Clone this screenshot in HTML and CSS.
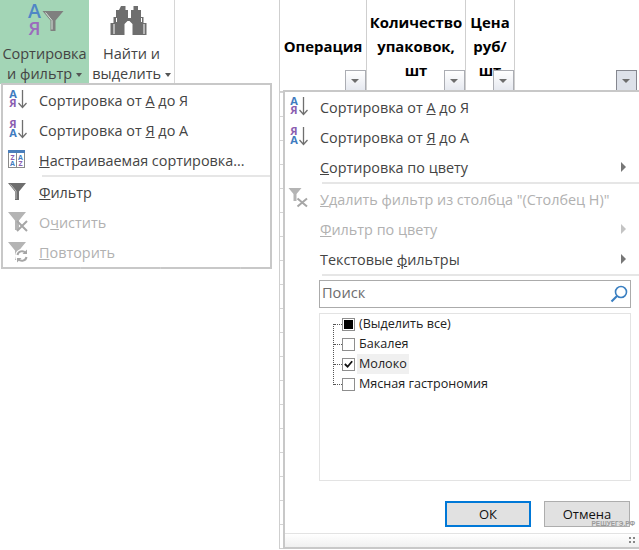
FILE: index.html
```html
<!DOCTYPE html>
<html lang="ru">
<head>
    <meta charset="UTF-8">
    <title>Сортировка и фильтр</title>
    <link rel="stylesheet" href="styles.css">
</head>
<body>

    <div class="page">
        <section class="ribbon-area">
            <div class="ribbon">
                <div class="ribbon-btn sort-btn">
                    <svg class="ribbon-icon" width="44" height="44" viewBox="0 0 44 44">
                        <text x="5" y="18" class="big-a">А</text>
                        <text x="5.500" y="35" class="big-ya">Я</text>
                        <path d="M19.500 11h21l-8 9.500V31h-5V20.500z" fill="#7f7f7f"/>
                        <path d="M22.500 12.500l6.500 8v9" fill="none" stroke="#d8e8de" stroke-width="1"/>
                    </svg>
                    <span>Сортировка</span>
                    <span>и фильтр <i class="caret"></i></span>
                </div>
                <div class="ribbon-btn find-btn">
                    <svg class="ribbon-icon" width="44" height="44" viewBox="0 0 44 44">
                        <g transform="translate(-109.5 0)">
                            <path d="M120.500 6h4.500v4h2.500v8h3v-8h2.500v-4h4.500v4h3v7h2.500v6h3v12h-14V24l-3-3h-2l-3 3v11h-14V23h3v-6h2.500v-7h3z" fill="#6e6e6e"/>
                            <path d="M113.500 24v10M116 18v4M143.500 24v10M141 18v4" stroke="#fff" stroke-width="1"/>
                        </g>
                    </svg>
                    <span>Найти и</span>
                    <span>выделить <i class="caret"></i></span>
                </div>
            </div>
        </section>

        <section class="sheet">
            <div class="sheet-head">
                <div class="head-cell col-op">Операция<b class="filter-btn"></b></div>
                <div class="head-cell col-qty">Количество упаковок, шт<b class="filter-btn"></b></div>
                <div class="head-cell col-price">Цена руб/ шт<b class="filter-btn"></b></div>
                <div class="head-cell col-last"><b class="filter-btn is-open"></b></div>
            </div>
        </section>
    </div>

    <div class="menu sort-menu">
        <div class="menu-item">
            <svg class="menu-icon" width="24" height="24" viewBox="0 0 24 24">
                <text x="7" y="10" class="ltr blue">А</text>
                <text x="7" y="19" class="ltr purple">Я</text>
                <path d="M16.500 2v17M12.500 15l4 4.500 4-4.500" fill="none" stroke="#6f6f6f" stroke-width="1.300"/>
            </svg>
            <span>Сортировка от <u>А</u> до Я</span>
        </div>
        <div class="menu-item">
            <svg class="menu-icon" width="24" height="24" viewBox="0 0 24 24">
                <text x="7" y="10" class="ltr purple">Я</text>
                <text x="7" y="19" class="ltr blue">А</text>
                <path d="M16.500 2v17M12.500 15l4 4.500 4-4.500" fill="none" stroke="#6f6f6f" stroke-width="1.300"/>
            </svg>
            <span>Сортировка от <u>Я</u> до А</span>
        </div>
        <div class="menu-item">
            <svg class="menu-icon" width="24" height="24" viewBox="0 0 24 24">
                <rect x="2.500" y="3.500" width="16" height="16" fill="#fff" stroke="#8a8a8a"/>
                <rect x="2" y="2" width="17" height="3" fill="#4a7ebb"/>
                <path d="M10.500 5v14" stroke="#8a8a8a"/>
                <text x="6.500" y="11.500" class="ltr-tiny purple">Z</text>
                <text x="6.500" y="18" class="ltr-tiny blue">A</text>
                <text x="14.500" y="11.500" class="ltr-tiny blue">A</text>
                <text x="14.500" y="18" class="ltr-tiny purple">Z</text>
            </svg>
            <span><u>Н</u>астраиваемая сортировка...</span>
        </div>
        <div class="menu-sep"></div>
        <div class="menu-item">
            <svg class="menu-icon" width="24" height="24" viewBox="0 0 24 24">
                <path d="M2 3h18l-7 8.500V20H9v-8.500z" fill="#6e6e6e"/>
                <path d="M4.500 4.500L10 11v8" fill="none" stroke="#fff" stroke-width=".8" opacity=".7"/>
            </svg>
            <span><u>Ф</u>ильтр</span>
        </div>
        <div class="menu-item disabled">
            <svg class="menu-icon" width="24" height="24" viewBox="0 0 24 24">
                <path d="M2 2h18l-7 8.500V20H9v-9.500z" fill="#b4b4b4"/>
                <path d="M11 11l10 10M21 11L11 21" stroke="#a6a6a6" stroke-width="2"/>
            </svg>
            <span>О<u>ч</u>истить</span>
        </div>
        <div class="menu-item disabled">
            <svg class="menu-icon" width="24" height="24" viewBox="0 0 24 24">
                <path d="M2 2h18l-7 8.500V20H9v-9.500z" fill="#b4b4b4"/>
                <circle cx="16" cy="16" r="7" fill="#fff"/>
                <path d="M11.500 15a4.500 4.500 0 0 1 8-2M20.500 17a4.500 4.500 0 0 1-8 2" fill="none" stroke="#a6a6a6" stroke-width="2"/>
                <path d="M21 9.500v4.500h-4.500zM11 22.500V18h4.500z" fill="#a6a6a6"/>
            </svg>
            <span><u>П</u>овторить</span>
        </div>
    </div>

    <div class="menu filter-menu">
        <div class="menu-item">
            <svg class="menu-icon" width="24" height="24" viewBox="0 0 24 24">
                <text x="7" y="10" class="ltr blue">А</text>
                <text x="7" y="19" class="ltr purple">Я</text>
                <path d="M16.500 2v17M12.500 15l4 4.500 4-4.500" fill="none" stroke="#6f6f6f" stroke-width="1.300"/>
            </svg>
            <span>Сортировка от <u>А</u> до Я</span>
        </div>
        <div class="menu-item">
            <svg class="menu-icon" width="24" height="24" viewBox="0 0 24 24">
                <text x="7" y="10" class="ltr purple">Я</text>
                <text x="7" y="19" class="ltr blue">А</text>
                <path d="M16.500 2v17M12.500 15l4 4.500 4-4.500" fill="none" stroke="#6f6f6f" stroke-width="1.300"/>
            </svg>
            <span>Сортировка от <u>Я</u> до А</span>
        </div>
        <div class="menu-item has-sub">
            <span class="menu-icon"></span>
            <span><u>С</u>ортировка по цвету</span>
        </div>
        <div class="menu-sep"></div>
        <div class="menu-item disabled">
            <svg class="menu-icon" width="24" height="24" viewBox="0 0 24 24">
                <path d="M1.500 1h13l-5 6v7h-3V7z" fill="#b4b4b4"/>
                <path d="M10.500 11.500l9.500 8M20 11.500l-9.500 8" stroke="#a6a6a6" stroke-width="2"/>
            </svg>
            <span><u>У</u>далить фильтр из столбца "(Столбец Н)"</span>
        </div>
        <div class="menu-item disabled has-sub">
            <span class="menu-icon"></span>
            <span><u>Ф</u>ильтр по цвету</span>
        </div>
        <div class="menu-item has-sub">
            <span class="menu-icon"></span>
            <span>Текстовые <u>ф</u>ильтры</span>
        </div>
        <div class="menu-sep"></div>

        <div class="filter-body">
            <div class="search-box">
                <span>Поиск</span>
                <svg width="20" height="20" viewBox="0 0 20 20">
                    <circle cx="12" cy="8" r="5.500" fill="none" stroke="#3a7fc1" stroke-width="1.600"/>
                    <path d="M8 12l-5.500 5.500" stroke="#3a7fc1" stroke-width="2.200"/>
                </svg>
            </div>
            <div class="value-list">
                <div class="tree-line"></div>
                <div class="value-row">
                    <i class="check is-mixed"></i><span>(Выделить все)</span>
                </div>
                <div class="value-row">
                    <i class="check"></i><span>Бакалея</span>
                </div>
                <div class="value-row">
                    <i class="check">
                        <svg width="12" height="12" viewBox="0 0 12 12"><path d="M2 6l3 3 5-6" fill="none" stroke="#111" stroke-width="2"/></svg>
                    </i><span class="is-hover">Молоко</span>
                </div>
                <div class="value-row">
                    <i class="check"></i><span>Мясная гастрономия</span>
                </div>
            </div>
            <div class="dialog-btns">
                <div class="btn btn-ok">ОК</div>
                <div class="btn">Отмена</div>
            </div>
        </div>

        <div class="status-bar"><i class="grip"></i></div>
    </div>

    <div class="watermark">РЕШУЕГЭ.РФ</div>

</body>
</html>
```

FILE: styles.css
```css
* {
    margin: 0;
    padding: 0;
    box-sizing: border-box;
}

body {
    font-family: 'Open Sans', 'Liberation Sans', sans-serif;
    background-color: #fff;
    color: #444;
    width: 639px;
    height: 550px;
    overflow: hidden;
    position: relative;
}

.page {
    display: flex;
    height: 550px;
}

/* left part: ribbon */
.ribbon-area {
    width: 279px;
    flex-shrink: 0;
}

.ribbon {
    display: flex;
    height: 84px;
}

.ribbon-btn {
    display: flex;
    flex-direction: column;
    align-items: center;
    font-size: 14.5px;
    line-height: 20px;
    color: #444;
    white-space: nowrap;
}

.ribbon-icon {
    height: 44px;
    flex-shrink: 0;
    overflow: visible;
}

.sort-btn {
    width: 89px;
    background-color: #a3d5b6;
}

.find-btn {
    width: 86px;
    border-right: 1px solid #d6d6d6;
}

.caret {
    display: inline-block;
    vertical-align: middle;
    border: 3.5px solid transparent;
    border-top: 4px solid #555;
    border-bottom: 0;
}

.big-a {
    font-size: 19.5px;
    font-weight: 600;
    fill: #4f86c6;
}

.big-ya {
    font-size: 18.5px;
    font-weight: 600;
    fill: #9b6bbd;
}

/* right part: sheet */
.sheet {
    flex: 1;
    border-left: 1px solid #cfcfcf;
    border-bottom: 1px solid #cfcfcf;
    height: 549px;
    background-image: repeating-linear-gradient(to bottom, transparent 0, transparent 23px, #d4d4d4 23px, #d4d4d4 24px);
    background-position: 0 -3px;
    background-color: #fff;
}

.sheet-head {
    display: grid;
    grid-template-columns: 87px 99px 49px 1fr;
    height: 92px;
    background-color: #fff;
    border-bottom: 1px solid #cfcfcf;
}

.head-cell {
    position: relative;
    display: flex;
    align-items: center;
    justify-content: center;
    text-align: center;
    font-weight: 700;
    font-size: 14.9px;
    line-height: 24px;
    color: #000;
    border-right: 1px solid #cfcfcf;
}

.col-last {
    border-right: none;
}

.filter-btn {
    position: absolute;
    right: 0;
    bottom: 0;
    width: 21px;
    height: 21px;
    border: 1px solid #abadb3;
    background: linear-gradient(to bottom, #fff, #e6e9f0);
}

.filter-btn::after {
    content: "";
    position: absolute;
    left: 5px;
    top: 8px;
    border: 4px solid transparent;
    border-top: 4px solid #6d6d6d;
    border-bottom: 0;
}

.filter-btn.is-open {
    right: 2px;
    border-color: #85878f;
    background: #dde1e9;
}

/* drop down menus */
.menu {
    position: absolute;
    background-color: #fff;
    border: 2px solid #c8c8c8;
    font-size: 14.4px;
}

.sort-menu {
    left: 1px;
    top: 83px;
    width: 271px;
    height: 186px;
}

.sort-menu::after {
    content: "";
    position: absolute;
    left: -3px;
    top: 100%;
    width: 273px;
    height: 2px;
    background: linear-gradient(#d0d0d0, #d0d0d0) 80px 0 / 1px 2px no-repeat,
                linear-gradient(#d0d0d0, #d0d0d0) 160px 0 / 1px 2px no-repeat,
                linear-gradient(#d0d0d0, #d0d0d0) 240px 0 / 1px 2px no-repeat;
}

.filter-menu {
    left: 283px;
    top: 90px;
    width: 358px;
    height: 459px;
}

.menu-item {
    display: flex;
    align-items: center;
    height: 30px;
    white-space: nowrap;
    position: relative;
}

.menu-icon {
    display: block;
    width: 24px;
    height: 24px;
    flex-shrink: 0;
    margin: 0 9px 0 3px;
    overflow: visible;
}

.filter-menu .menu-icon {
    margin: 0 9px 0 2px;
}

.has-sub::after {
    content: "";
    position: absolute;
    right: 13px;
    top: 10px;
    border: 5px solid transparent;
    border-left: 5px solid #777;
    border-right: 0;
}

.disabled {
    color: #b1b1b1;
}

.disabled.has-sub::after {
    border-left-color: #c4c4c4;
}

.menu-sep {
    height: 2px;
    margin-left: 39px;
    background-color: #e6e6e6;
}

.filter-menu .menu-sep {
    margin-left: 37px;
}

.ltr {
    font-size: 11px;
    font-weight: 700;
    text-anchor: middle;
}

.ltr-tiny {
    font-size: 7px;
    font-weight: 700;
    text-anchor: middle;
}

.blue {
    fill: #3f7cbf;
}

.purple {
    fill: #8a5db0;
}

/* filter panel */
.filter-body {
    padding: 4px 8px 0 34px;
}

.search-box {
    display: flex;
    align-items: center;
    justify-content: space-between;
    height: 28px;
    padding: 0 1px 0 2px;
    border: 1px solid #ababab;
    font-size: 14.6px;
    color: #6d6d6d;
}

.search-box span {
    padding-bottom: 4px;
}

.value-list {
    position: relative;
    height: 168px;
    margin-top: 5px;
    border: 1px solid #e3e3e3;
    font-size: 12.6px;
    color: #222;
}

.tree-line {
    position: absolute;
    left: 13px;
    top: 10px;
    height: 61px;
    border-left: 1px dotted #555;
}

.value-row {
    display: flex;
    align-items: center;
    height: 20px;
    padding-left: 22px;
    position: relative;
}

.value-row::before {
    content: "";
    position: absolute;
    left: 14px;
    top: 10px;
    width: 8px;
    border-top: 1px dotted #555;
}

.value-row span {
    margin-left: 2px;
    padding: 0 2px;
    line-height: 20px;
}

.value-row .is-hover {
    background-color: #f0f0f0;
}

.check {
    display: flex;
    align-items: center;
    justify-content: center;
    width: 13px;
    height: 13px;
    border: 1px solid #8e8e8e;
    background-color: #fff;
}

.check.is-mixed::after {
    content: "";
    width: 9px;
    height: 9px;
    background-color: #000;
}

.dialog-btns {
    display: flex;
    justify-content: flex-end;
    gap: 13px;
    margin-top: 20px;
    padding-right: 1px;
}

.btn {
    width: 86px;
    height: 26px;
    display: flex;
    align-items: center;
    justify-content: center;
    font-size: 13px;
    color: #111;
    background-color: #e1e1e1;
    border: 1px solid #adadad;
}

.btn-ok {
    border: 2px solid #0078d7;
}

.status-bar {
    position: absolute;
    left: 0;
    right: 0;
    top: 441px;
    height: 14px;
    border-top: 1px solid #e3e3e3;
    background: linear-gradient(to bottom, #fff, #f0f0f0);
}

.grip {
    position: absolute;
    right: 4px;
    bottom: 4px;
    width: 6px;
    height: 6px;
    background: linear-gradient(to right, #888 0 2px, transparent 2px 4px, #888 4px) 0 0 / 6px 2px no-repeat,
                linear-gradient(to right, #888 0 2px, transparent 2px 4px, #888 4px) 0 4px / 6px 2px no-repeat;
}

.watermark {
    position: absolute;
    right: 4px;
    top: 519px;
    font-family: 'Liberation Sans', sans-serif;
    font-size: 6.5px;
    font-weight: 700;
    line-height: 9px;
    color: #9a9a9a;
}
```
